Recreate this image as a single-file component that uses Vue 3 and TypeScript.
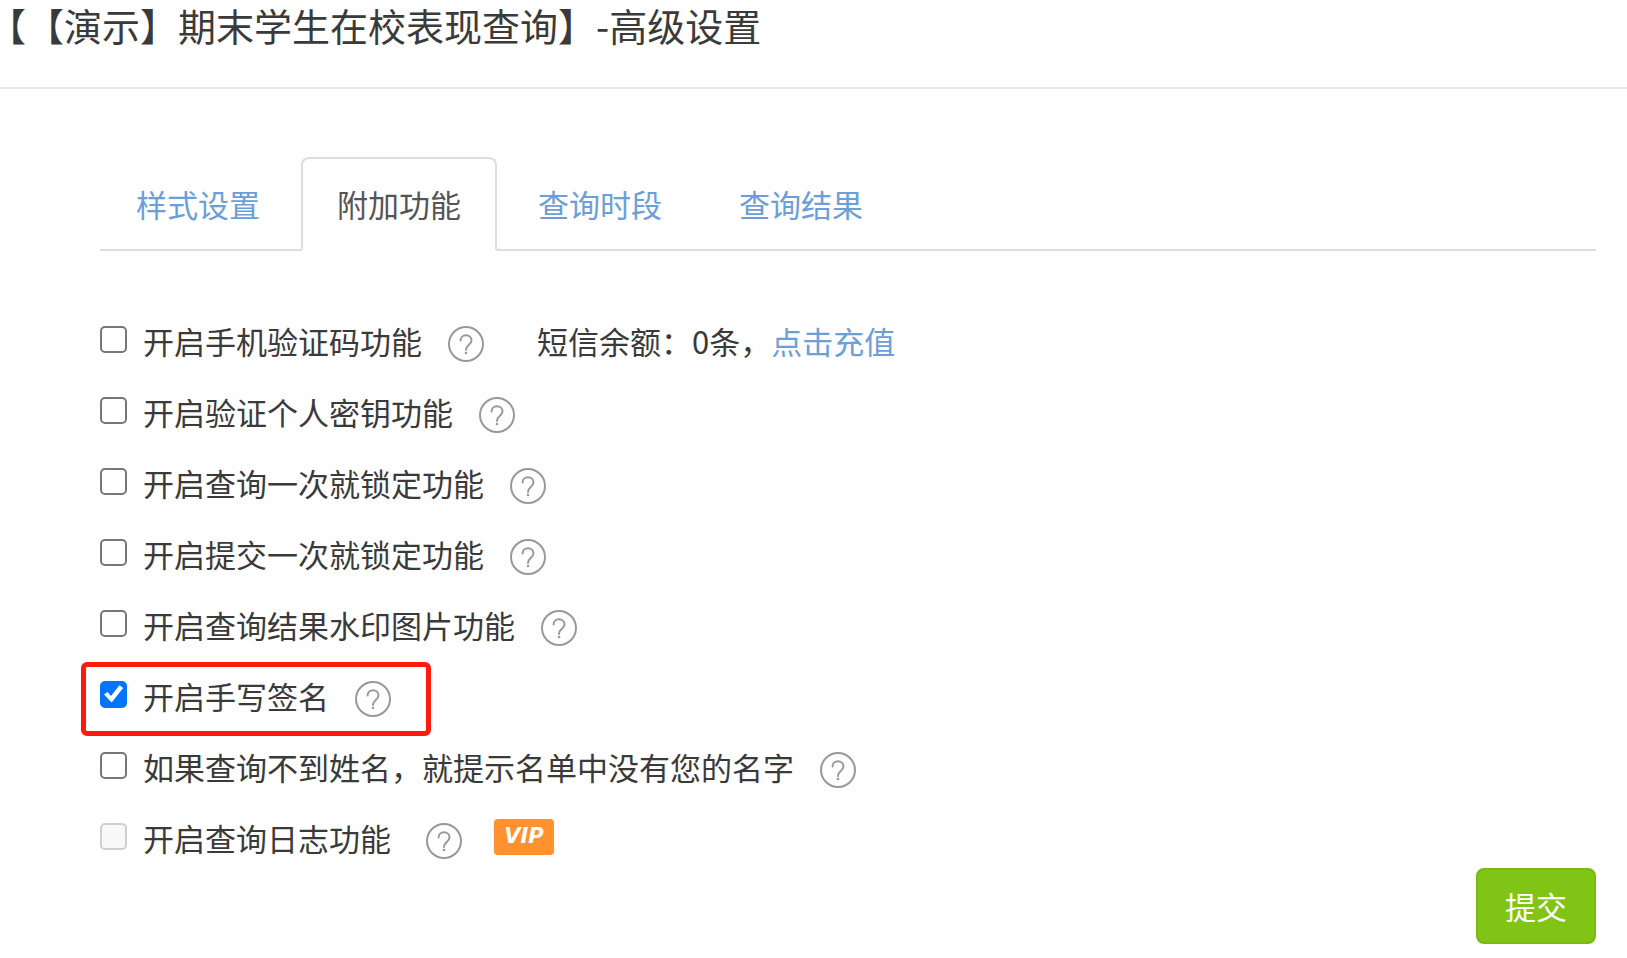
<script setup lang="ts">
import { ref } from 'vue'

interface Tab {
  id: string
  label: string
}

interface Option {
  id: string
  label: string
  checked: boolean
  disabled?: boolean
  highlighted?: boolean
  balance?: number
  vip?: boolean
}

const formName = '【演示】期末学生在校表现查询'

const tabs: Tab[] = [
  { id: 'style', label: '样式设置' },
  { id: 'extra', label: '附加功能' },
  { id: 'period', label: '查询时段' },
  { id: 'result', label: '查询结果' },
]
const activeTab = ref('extra')

const options = ref<Option[]>([
  { id: 'sms', label: '开启手机验证码功能', checked: false, balance: 0 },
  { id: 'key', label: '开启验证个人密钥功能', checked: false },
  { id: 'lock-query', label: '开启查询一次就锁定功能', checked: false },
  { id: 'lock-submit', label: '开启提交一次就锁定功能', checked: false },
  { id: 'watermark', label: '开启查询结果水印图片功能', checked: false },
  { id: 'signature', label: '开启手写签名', checked: true, highlighted: true },
  { id: 'not-found', label: '如果查询不到姓名，就提示名单中没有您的名字', checked: false },
  { id: 'log', label: '开启查询日志功能', checked: false, disabled: true, vip: true },
])
</script>

<template>
  <div class="page">
    <header class="header">
      <h1 class="title"><span class="bracket">【</span>{{ formName }}】-高级设置</h1>
    </header>

    <form class="content" @submit.prevent>
      <nav class="tabs">
        <a
          v-for="tab in tabs"
          :key="tab.id"
          href="#"
          class="tab"
          :class="{ active: tab.id === activeTab }"
          @click.prevent="activeTab = tab.id"
        >{{ tab.label }}</a>
      </nav>

      <ul class="options">
        <li
          v-for="option in options"
          :key="option.id"
          class="option"
          :class="{ highlighted: option.highlighted, premium: option.vip }"
        >
          <input
            :id="option.id"
            v-model="option.checked"
            type="checkbox"
            class="check"
            :disabled="option.disabled"
          />
          <label :for="option.id" class="label">{{ option.label }}</label>
          <svg class="help" viewBox="0 0 36 36" aria-hidden="true">
            <circle cx="18" cy="18" r="17" />
            <path d="M12.6 14.4C12.6 11.2 14.9 9.3 18 9.3s5.5 2 5.5 4.9c0 2.3-1.3 3.5-2.8 4.8-1.6 1.4-2.7 2.5-2.7 4.9" />
            <circle class="dot" cx="18" cy="27" r="1.3" />
          </svg>
          <span v-if="option.balance !== undefined" class="balance">短信余额：{{ option.balance }}条，<a href="#" class="link">点击充值</a></span>
          <span v-if="option.vip" class="vip">VIP</span>
        </li>
      </ul>

      <div class="actions">
        <button type="submit" class="submit">提交</button>
      </div>
    </form>
  </div>
</template>

<style>
body {
  margin: 0;
  background: #fefefe;
}
</style>

<style scoped>
.page {
  color: #3a3a3a;
  font-family: "Noto Sans CJK SC", sans-serif;
  font-size: 31px;
  line-height: 44px;
  text-spacing-trim: space-all;
}

.header {
  padding: 0 7px 37px;
  border-bottom: 2px solid #e8e8e8;
}

.title {
  margin: 0;
  font-size: 38px;
  font-weight: 400;
  line-height: 50px;
}

/* Half-width form, so the opening bracket sits at the page edge */
.bracket {
  font-feature-settings: "halt";
}

.content {
  padding: 68px 31px 14px 100px;
}

.tabs {
  display: flex;
  gap: 5px;
  border-bottom: 2px solid #ddd;
}

.tab {
  margin-bottom: -2px;
  padding: 23px 34px;
  border: 2px solid transparent;
  border-radius: 8px 8px 0 0;
  color: #6c9fd8;
  text-decoration: none;
}

.tab.active {
  border-color: #ddd;
  border-bottom-color: #fefefe;
  background: #fefefe;
  color: #555;
}

.options {
  margin: 56px 0 0;
  padding: 0;
  list-style: none;
}

.option {
  position: relative;
  display: flex;
  align-items: center;
  width: fit-content;
  height: 71px;
}

.option.highlighted::after {
  content: "";
  position: absolute;
  inset: 0 -40px -3px -19px;
  border: 5px solid #ff1b0c;
  border-radius: 6px;
  pointer-events: none;
}

.check {
  appearance: none;
  flex: none;
  box-sizing: border-box;
  width: 27px;
  height: 27px;
  margin: 0 16px 6px 0;
  border: 2px solid #777;
  border-radius: 5px;
  background: #fff;
}

.check:checked {
  border-color: #0075ff;
  background: #0075ff;
}

.check:checked::before {
  content: "";
  display: block;
  width: 23px;
  height: 23px;
  background: #fff;
  clip-path: polygon(9% 50%, 24% 39%, 39% 56%, 76% 10%, 92% 22%, 42% 85%);
}

.check:disabled {
  border-color: #d0d0d0;
  background: #f8f8f8;
}

.label,
.balance {
  margin-bottom: 4px;
}

.help {
  flex: none;
  width: 36px;
  height: 36px;
  margin: 2px 0 0 26px;
  fill: none;
  stroke: #999;
  stroke-width: 2;
  stroke-linecap: round;
}

.dot {
  fill: #999;
  stroke: none;
}

.balance {
  margin-left: 53px;
}

.link {
  color: #6c9fd8;
  text-decoration: none;
}

.premium .help {
  margin-left: 35px;
}

.vip {
  width: 60px;
  height: 36px;
  margin: 0 0 6px 32px;
  border-radius: 4px;
  background: #ff922e;
  color: #fff;
  font: italic 700 21px/34px "DejaVu Sans", sans-serif;
  text-align: center;
}

.actions {
  display: flex;
  justify-content: flex-end;
  margin-top: -7px;
}

.submit {
  padding: 14px 27px;
  border: 2px solid #78b817;
  border-radius: 8px;
  background: #80c516;
  color: #fff;
  font: inherit;
}
</style>
